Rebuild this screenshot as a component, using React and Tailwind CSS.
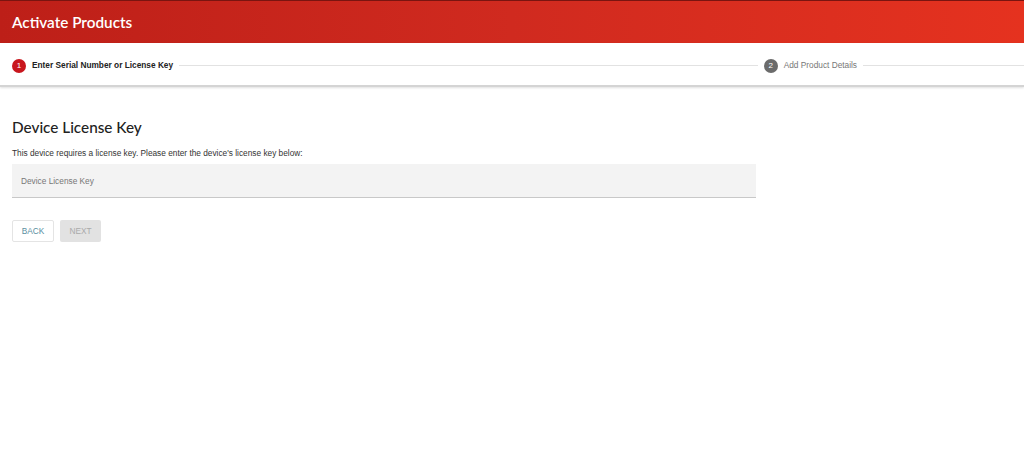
import React from 'react';

const Step = ({ num, label, active }) => (
  <div className="flex items-center">
    <div
      className={`flex h-[14px] w-[14px] items-center justify-center rounded-full text-[8px] text-white ${
        active ? 'bg-[#c8161d]' : 'bg-[#6b6b6b]'
      }`}
    >
      {num}
    </div>
    <span className={`ml-[6px] text-[8.3px] ${active ? 'font-bold text-[#222]' : 'text-[#777]'}`}>{label}</span>
  </div>
);

export default function App() {
  return (
    <div className="min-h-[462px] bg-white font-['Liberation_Sans',Arial,sans-serif]">
      {/* header */}
      <div className="h-[43px] border-t border-[#7a1410] bg-gradient-to-r from-[#bd1f18] via-[#d02a1f] to-[#e5321f] px-[12px] flex items-center">
        <h1 className="font-['Lato',sans-serif] text-[15.3px] font-semibold text-white">Activate Products</h1>
      </div>

      {/* stepper */}
      <div className="flex h-[44px] items-center border-b-2 border-[#d4d4d4] pl-[12px] pt-[3px] shadow-[0_1px_2px_rgba(0,0,0,0.12)]">
        <Step num="1" label="Enter Serial Number or License Key" active />
        <div className="mx-[6px] h-px flex-1 bg-[#e2e2e2]" />
        <Step num="2" label="Add Product Details" />
        <div className="ml-[6px] h-px w-[161px] bg-[#e2e2e2]" />
      </div>

      {/* content */}
      <div className="px-[12px] pt-[30px]">
        <h2 className="font-['Lato',sans-serif] text-[15.3px] font-medium text-[#222] leading-[20px]">Device License Key</h2>
        <p className="mt-[10px] text-[8.3px] text-[#333]">
          This device requires a license key. Please enter the device's license key below:
        </p>
        <div className="mt-[5px] flex h-[34px] w-[744px] items-center border-b border-[#c8c8c8] bg-[#f3f3f3] px-[9px]">
          <span className="text-[8.3px] text-[#777]">Device License Key</span>
        </div>
        <div className="mt-[22px] flex gap-[6px]">
          <button className="h-[22px] w-[42px] rounded-[2px] border border-[#e4e4e4] bg-white text-[8.3px] text-[#5a8ea0]">
            BACK
          </button>
          <button className="h-[22px] w-[41px] rounded-[2px] bg-[#e2e2e2] text-[8.3px] text-[#aaa]">NEXT</button>
        </div>
      </div>
    </div>
  );
}
